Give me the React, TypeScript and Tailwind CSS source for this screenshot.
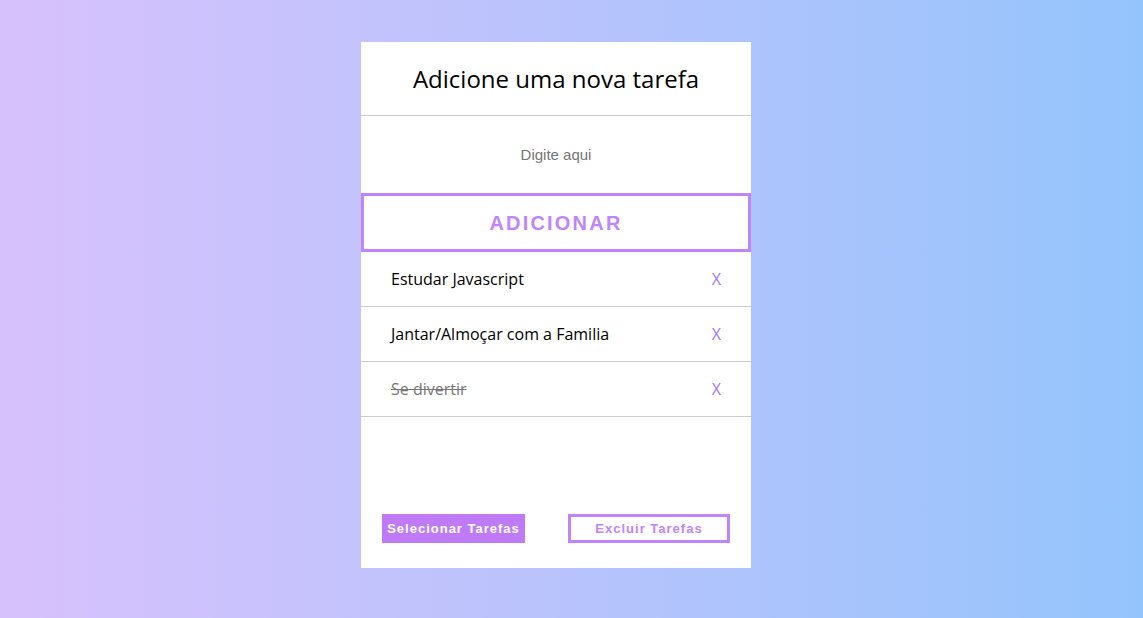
import { useState } from 'react';

type Task = { id: number; text: string; done: boolean };

const initialTasks: Task[] = [
  { id: 1, text: 'Estudar Javascript', done: false },
  { id: 2, text: 'Jantar/Almoçar com a Familia', done: false },
  { id: 3, text: 'Se divertir', done: true },
];

export default function App() {
  const [tasks, setTasks] = useState<Task[]>(initialTasks);
  const [value, setValue] = useState('');

  const addTask = () => {
    if (!value.trim()) return;
    setTasks([...tasks, { id: Date.now(), text: value, done: false }]);
    setValue('');
  };

  return (
    <div className="min-h-screen w-full bg-gradient-to-r from-[#d7c1fc] to-[#94c4fc] flex justify-center pt-[42px] pr-[31px]">
      <div className="w-[390px] h-[526px] bg-white flex flex-col">
        {/* header */}
        <div className="h-[74px] border-b border-[#cccccc] flex items-center justify-center">
          <h1 className="text-[24px] text-black font-['Open_Sans',sans-serif] pt-[1px]">
            Adicione uma nova tarefa
          </h1>
        </div>

        {/* input */}
        <div className="h-[77px] flex items-center">
          <input
            value={value}
            onChange={(e) => setValue(e.target.value)}
            placeholder="Digite aqui"
            className="w-full text-center text-[15px] font-['Liberation_Sans',Arial,sans-serif] outline-none placeholder:text-[#757575] pt-[1px]"
          />
        </div>

        <button
          onClick={addTask}
          className="h-[59px] w-full border-[3px] border-[#c084fc] text-[#c084fc] font-bold text-[20px] tracking-[2.2px] font-['Liberation_Sans',Arial,sans-serif] flex items-center justify-center"
        >
          ADICIONAR
        </button>

        {/* lista */}
        <ul>
          {tasks.map((t) => (
            <li
              key={t.id}
              onClick={() => setTasks(tasks.map((x) => (x.id === t.id ? { ...x, done: !x.done } : x)))}
              className="h-[55px] border-b border-[#cccccc] flex items-center justify-between pl-[30px] pr-[30px] font-['Open_Sans',sans-serif] text-[16px]"
            >
              <span className={t.done ? 'line-through text-[#777777]' : 'text-black'}>{t.text}</span>
              <span
                onClick={(e) => {
                  e.stopPropagation();
                  setTasks(tasks.filter((x) => x.id !== t.id));
                }}
                className="text-[#a377f7] font-['Open_Sans',sans-serif] text-[16px] cursor-pointer"
              >
                X
              </span>
            </li>
          ))}
        </ul>

        {/* rodape */}
        <div className="mt-auto flex justify-between px-[21px] pb-[25px]">
          <button className="w-[143px] h-[29px] bg-[#bf7bf7] text-white font-bold text-[13px] tracking-[1px] font-['Liberation_Sans',Arial,sans-serif] flex items-center justify-center">
            Selecionar Tarefas
          </button>
          <button
            onClick={() => setTasks(tasks.filter((x) => !x.done))}
            className="w-[162px] h-[29px] border-[3px] border-[#c084fc] text-[#c084fc] font-bold text-[13px] tracking-[1px] font-['Liberation_Sans',Arial,sans-serif] flex items-center justify-center"
          >
            Excluir Tarefas
          </button>
        </div>
      </div>
    </div>
  );
}
